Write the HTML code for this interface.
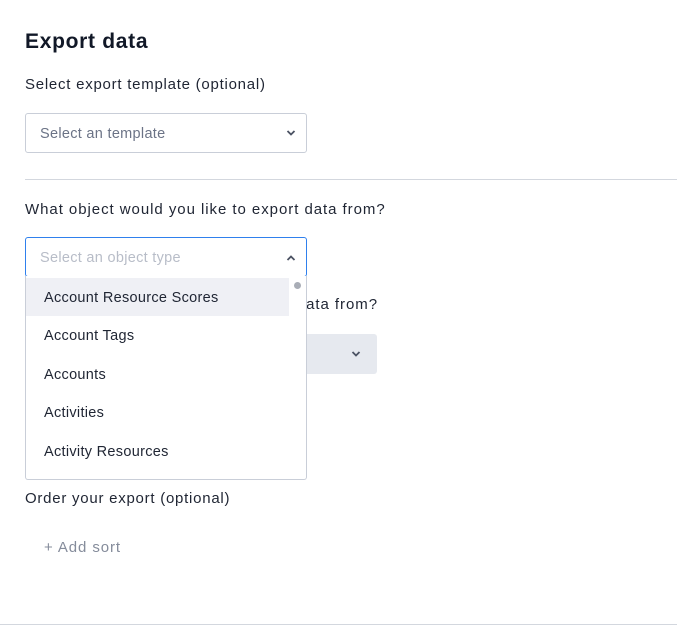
<!DOCTYPE html>
<html><head><style>
body{margin:0;width:677px;height:631px;background:#fff;font-family:"Liberation Sans",sans-serif;position:relative;overflow:hidden;color:#1f2533}
.a{position:absolute;white-space:nowrap}
.lbl{font-size:15px;color:#1f2533;letter-spacing:0.75px}
.box{position:absolute;border:1px solid #c9ced8;border-radius:3px;box-sizing:border-box;background:#fff}
.ch{position:absolute;width:10px;height:6px}
.it{position:absolute;left:44px;font-size:14.5px;color:#1f2533;letter-spacing:0.3px}
</style></head><body>
<div class="a" style="left:25px;top:30px;font-size:21px;font-weight:bold;color:#111827;letter-spacing:0.7px">Export data</div>
<div class="a lbl" style="left:25px;top:76px">Select export template (optional)</div>
<div class="box" style="left:25px;top:113px;width:282px;height:40px"></div>
<div class="a" style="left:40px;top:126px;font-size:14.5px;color:#6b7386;letter-spacing:0.3px">Select an template</div>
<svg class="ch" style="left:286px;top:130px" viewBox="0 0 10 6"><path d="M1.5 1l3.5 3.5L8.5 1" fill="none" stroke="#4b5263" stroke-width="1.8"/></svg>
<div class="a" style="left:25px;top:179px;width:652px;height:1px;background:#d3d7de"></div>
<div class="a lbl" style="left:25px;top:201px;letter-spacing:0.95px">What object would you like to export data from?</div>
<div class="a lbl" style="right:299px;top:296px;letter-spacing:0.95px">data from?</div>
<div class="a" style="left:290px;top:334px;width:87px;height:40px;background:#e6e9ef;border-radius:3px"></div>
<svg class="ch" style="left:351px;top:351px" viewBox="0 0 10 6"><path d="M1.5 1l3.5 3.5L8.5 1" fill="none" stroke="#4b5263" stroke-width="1.8"/></svg>
<div class="box" style="left:25px;top:237px;width:282px;height:40px;border-color:#2f80ed"></div>
<div class="a" style="left:40px;top:250px;font-size:14.5px;color:#b8bdc8;letter-spacing:0.3px">Select an object type</div>
<svg class="ch" style="left:286px;top:255px" viewBox="0 0 10 6"><path d="M1.5 5l3.5-3.5L8.5 5" fill="none" stroke="#4b5263" stroke-width="1.8"/></svg>
<div class="box" style="left:25px;top:276px;width:282px;height:204px;border-radius:0 0 3px 3px;border-top:none"></div>
<div class="a" style="left:26px;top:278px;width:263px;height:38px;background:#eff0f5"></div>
<div class="a" style="left:294px;top:282px;width:7px;height:7px;border-radius:50%;background:#a9adb6"></div>
<div class="a it" style="top:290px">Account Resource Scores</div>
<div class="a it" style="top:328px">Account Tags</div>
<div class="a it" style="top:367px">Accounts</div>
<div class="a it" style="top:405px">Activities</div>
<div class="a it" style="top:444px">Activity Resources</div>
<div class="a lbl" style="left:25px;top:490px">Order your export (optional)</div>
<div class="a" style="left:44px;top:539px;font-size:15px;color:#858c9b;letter-spacing:0.9px">+ Add sort</div>
<div class="a" style="left:0;top:624px;width:677px;height:1px;background:#d3d7de"></div>
</body></html>
